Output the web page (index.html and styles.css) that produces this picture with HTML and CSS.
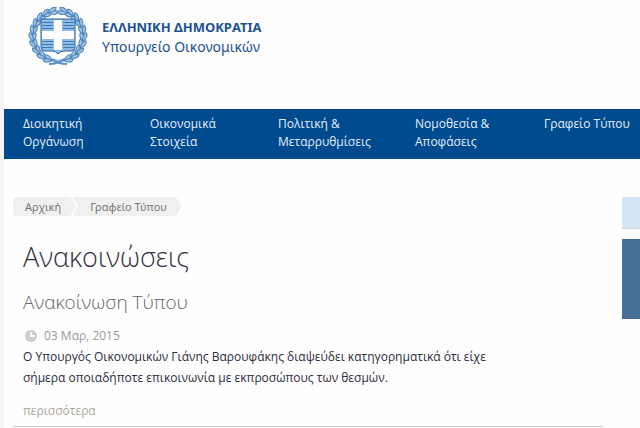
FILE: index.html
```html
<!DOCTYPE html>
<html lang="el">
<head>
	<meta charset="UTF-8">
	<title>Υπουργείο Οικονομικών</title>
	<link rel="stylesheet" href="styles.css">
</head>
<body>
<div class="page">
	<header class="header">
		<svg class="emblem" viewBox="-32 -32 64 64" aria-hidden="true">
			<defs>
				<g id="leaf">
					<path d="M0 25 C3 21 7 20 9 22 C8 25 4 26 0 25Z"/>
					<path d="M0 25 C3 29 7 29 9 27 C8 25 4 24 0 25Z"/>
				</g>
				<g id="branch">
					<use href="#leaf" transform="rotate(-14)"/>
					<use href="#leaf" transform="rotate(-30)"/>
					<use href="#leaf" transform="rotate(-46)"/>
					<use href="#leaf" transform="rotate(-62)"/>
					<use href="#leaf" transform="rotate(-78)"/>
					<use href="#leaf" transform="rotate(-94)"/>
					<use href="#leaf" transform="rotate(-110)"/>
					<use href="#leaf" transform="rotate(-126)"/>
					<use href="#leaf" transform="rotate(-142)"/>
					<use href="#leaf" transform="rotate(-158)"/>
				</g>
			</defs>
			<circle class="ring" r="25"/>
			<g class="leaves">
				<use href="#branch"/>
				<use href="#branch" transform="scale(-1 1)"/>
			</g>
			<path class="stem" d="M-9 28 Q0 28 6 23 M9 28 Q0 28 -6 23"/>
			<path class="shield" d="M-17 -17 H17 V11 Q17 15 13 15 H6 Q2 15 0 18 Q-2 15 -6 15 H-13 Q-17 15 -17 11Z"/>
			<path class="hatch" d="M-16 -13.5H-5 M-16 -10.5H-5 M-16 -7.5H-5 M5 -13.5H16 M5 -10.5H16 M5 -7.5H16 M-16 5.5H-5 M-16 8.5H-5 M-16 11.5H-5 M5 5.5H16 M5 8.5H16 M5 11.5H16"/>
			<path class="cross" d="M-4 -16H4V-5H16V3H4V14H-4V3H-16V-5H-4Z"/>
		</svg>
		<div class="brand">
			<strong>ΕΛΛΗΝΙΚΗ ΔΗΜΟΚΡΑΤΙΑ</strong>
			<span>Υπουργείο Οικονομικών</span>
		</div>
	</header>

	<nav class="nav">
		<a href="#">Διοικητική Οργάνωση</a>
		<a href="#">Οικονομικά Στοιχεία</a>
		<a href="#">Πολιτική &amp; Μεταρρυθμίσεις</a>
		<a href="#">Νομοθεσία &amp; Αποφάσεις</a>
		<a href="#">Γραφείο Τύπου</a>
	</nav>

	<div class="columns">
		<main class="main">
			<div class="crumbs">
				<a href="#">Αρχική</a>
				<a href="#">Γραφείο Τύπου</a>
			</div>
			<article class="article">
				<h1>Ανακοινώσεις</h1>
				<h2>Ανακοίνωση Τύπου</h2>
				<div class="date">
					<svg viewBox="0 0 12 12" aria-hidden="true">
						<circle cx="6" cy="6" r="6"/>
						<path d="M6 2V6H10"/>
					</svg>
					<time datetime="2015-03-03">03 Μαρ, 2015</time>
				</div>
				<p>Ο Υπουργός Οικονομικών Γιάνης Βαρουφάκης διαψεύδει κατηγορηματικά ότι είχε σήμερα οποιαδήποτε επικοινωνία με εκπροσώπους των θεσμών.</p>
				<a class="more" href="#">περισσότερα</a>
			</article>
		</main>
		<aside class="side">
			<div class="box-light"></div>
			<div class="box-dark"></div>
		</aside>
	</div>
</div>
</body>
</html>
```
FILE: styles.css
```css
*{margin: 0;padding: 0;box-sizing: border-box;}
body{background: #f6f6f6;font-family: "Open Sans","Noto Sans",sans-serif;font-size: 12px;overflow: hidden;}
a{text-decoration: none;}
.page{margin-left: 4px;min-height: 100vh;background: #fefefe;}

.header{display: flex;height: 109px;padding: 4px 0 0 22px;}
.emblem{width: 64px;height: 64px;}
.ring{fill: none;stroke: #a9c9e6;stroke-width: 3;}
.leaves{fill: #9cc3e4;stroke: #4d83b9;stroke-width: 1;}
.stem{fill: none;stroke: #5a8fc2;stroke-width: 2;}
.shield{fill: #8fbce4;stroke: #2d5f9a;stroke-width: 1;}
.hatch{stroke: #3f78b4;stroke-width: 1;}
.cross{fill: #fff;}
.brand{display: flex;flex-direction: column;padding: 14px 0 0 12px;color: #1d5390;font-family: "Noto Sans",sans-serif;line-height: 19px;}
.brand strong{font-size: 13px;}
.brand span{font-size: 14px;}

.nav{display: grid;grid-template-columns: 127fr 128fr 137fr 129fr 96fr;min-height: 50px;padding: 6px 0 8px 19px;background: #004a8f;}
.nav a{padding-right: 20px;color: #e4eefa;line-height: 18px;}
.nav a:last-child{padding-right: 0;white-space: nowrap;}

.columns{display: flex;gap: 19px;padding: 38px 0 0 9px;}
.main{flex: 1;}
.crumbs{display: flex;font-family: "Noto Sans",sans-serif;}
.crumbs a{height: 19px;padding: 0 15px 0 12px;background: #f0f0f0;color: #777;font-size: 11px;line-height: 19px;clip-path: polygon(0 0,calc(100% - 6px) 0,100% 50%,calc(100% - 6px) 100%,0 100%);border-radius: 3px;}
.crumbs a + a{padding-left: 18px;margin-left: -4px;clip-path: polygon(0 0,calc(100% - 6px) 0,100% 50%,calc(100% - 6px) 100%,0 100%,6px 50%);}

.article{padding: 21px 0 5px 10px;border-bottom: 1px solid #ccc;}
.article h1{color: #2e3040;font-size: 27px;font-weight: 300;line-height: 40px;}
.article h2{margin-top: 7px;color: #666;font-size: 19px;font-weight: 300;line-height: 36px;}
.date{display: flex;align-items: center;gap: 7px;padding: 6px 0 0 2px;color: #999;line-height: 20px;}
.date svg{width: 12px;height: 12px;}
.date circle{fill: #ccc;}
.date path{fill: none;stroke: #fff;stroke-width: 2;}
.article p{max-width: 490px;color: #2b2b40;line-height: 21px;}
.more{display: block;margin-top: 13px;color: #aaa89c;line-height: 20px;}

.side{width: 18px;}
.box-light{height: 32px;background: #d2e5f7;border-bottom: 1px solid #ccd6df;}
.box-dark{height: 80px;margin-top: 10px;background: #456f99;}
```
